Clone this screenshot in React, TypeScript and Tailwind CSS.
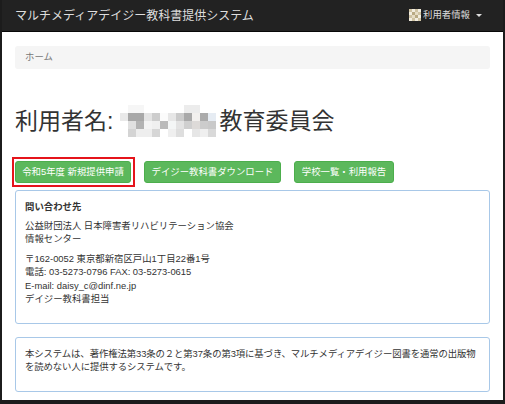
import React from 'react'

const font = { fontFamily: '"Liberation Sans", "Noto Sans CJK JP", sans-serif' }

const mosaic = [
  ['#fff', '#f6f6f6', '#f6f6f6', '#fff', '#fff', '#fff', '#fff', '#fff', '#ececec', '#ececec', '#fff', '#fff'],
  ['#e9e9e9', '#a8a8a8', '#a8a8a8', '#e4e4e4', '#cdcdcd', '#fbfbfb', '#e7e7e7', '#cbcbcb', '#a9a9a9', '#f2f0ee', '#ababab', '#e6ecf3'],
  ['#fff', '#e0e0e0', '#b3b3b3', '#f4f4f4', '#f0f0f0', '#bababa', '#f4f6f6', '#e3e3e3', '#cfcfcf', '#dddad8', '#cccccc', '#c9c9c9'],
  ['#fff', '#d4d4d4', '#eeeeee', '#eeeeee', '#d6d6d6', '#fff', '#efefef', '#dedede', '#fff', '#e6e6e6', '#efefef', '#d9d9d9'],
]

function Mosaic() {
  return (
    <svg width="96" height="32" viewBox="0 0 96 32" className="shrink-0">
      {mosaic.map((row, r) =>
        row.map((c, i) => <rect key={`${r}-${i}`} x={i * 8} y={r * 8} width="8" height="8" fill={c} />)
      )}
    </svg>
  )
}

function UserIcon() {
  const cells = [
    ['#cfc3a3', '#f2ede0', '#cfc3a3', '#f2ede0'],
    ['#f2ede0', '#b9aa84', '#e6dcc4', '#cfc3a3'],
    ['#cfc3a3', '#e6dcc4', '#b9aa84', '#f2ede0'],
    ['#f2ede0', '#cfc3a3', '#f2ede0', '#cfc3a3'],
  ]
  return (
    <svg width="12" height="12" viewBox="0 0 12 12">
      {cells.map((row, r) => row.map((c, i) => <rect key={`${r}-${i}`} x={i * 3} y={r * 3} width="3" height="3" fill={c} />))}
    </svg>
  )
}

export default function App() {
  return (
    <div style={font} className="box-border flex h-[404px] w-[505px] flex-col border-x-2 border-b-[4px] border-[#1c1c1c] bg-white text-[#333]">
      <nav className="flex h-[32px] shrink-0 items-center justify-between border-b border-[#080808] bg-[#222] pl-[13px] pr-[21px]">
        <span className="text-[12px] text-[#dedede]">マルチメディアデイジー教科書提供システム</span>
        <div className="flex items-center gap-[2px] text-[9.4px] text-[#dedede]">
          <UserIcon />
          <span>利用者情報</span>
          <span className="ml-[4px] h-0 w-0 border-x-[3px] border-t-[3px] border-x-transparent border-t-[#dedede]" />
        </div>
      </nav>

      <main className="px-[13px]">
        <div className="mt-[14px] flex h-[23px] items-center rounded-[3px] bg-[#f5f5f5] px-[10px] text-[9.4px] text-[#777]">
          ホーム
        </div>

        <h1 className="mt-[36px] flex items-center text-[23px] leading-[32px] font-normal">
          <span>利用者名:</span>
          <span className="ml-[7px]">
            <Mosaic />
          </span>
          <span className="ml-[3px]">教育委員会</span>
        </h1>

        <div className="mt-[24px] flex gap-[13px] text-[9.4px] text-white">
          <button className="relative flex h-[22px] w-[116px] items-center justify-center rounded-[3px] border border-[#4cae4c] bg-[#5cb85c]">
            令和5年度 新規提供申請
            <span className="pointer-events-none absolute -top-[5px] -right-[5px] -bottom-[5px] -left-[4px] border-2 border-[#e5141b]" />
          </button>
          <button className="flex h-[22px] w-[137px] items-center justify-center rounded-[3px] border border-[#4cae4c] bg-[#5cb85c]">
            デイジー教科書ダウンロード
          </button>
          <button className="flex h-[22px] w-[100px] items-center justify-center rounded-[3px] border border-[#4cae4c] bg-[#5cb85c]">
            学校一覧・利用報告
          </button>
        </div>

        <section className="mt-[7px] rounded-[3px] border border-[#a8c8e8] px-[9px] pt-[9px] pb-[10px] text-[9.4px] leading-[13.5px]">
          <p className="mb-[5px] font-bold">問い合わせ先</p>
          <p className="mb-[6px]">
            公益財団法人 日本障害者リハビリテーション協会
            <br />
            情報センター
          </p>
          <p className="mb-[7px]">
            〒162-0052 東京都新宿区戸山1丁目22番1号
            <br />
            電話: 03-5273-0796 FAX: 03-5273-0615
            <br />
            E-mail: daisy_c@dinf.ne.jp
            <br />
            デイジー教科書担当
          </p>
        </section>

        <section className="mt-[13px] rounded-[3px] border border-[#a8c8e8] px-[9px] pt-[9px] pb-[10px] text-[9.4px] leading-[13.5px]">
          <p className="mb-[7px] whitespace-nowrap tracking-[-0.1px]">
            本システムは、著作権法第33条の２と第37条の第3項に基づき、マルチメディアデイジー図書を通常の出版物
            <br />
            を読めない人に提供するシステムです。
          </p>
        </section>
      </main>
    </div>
  )
}
